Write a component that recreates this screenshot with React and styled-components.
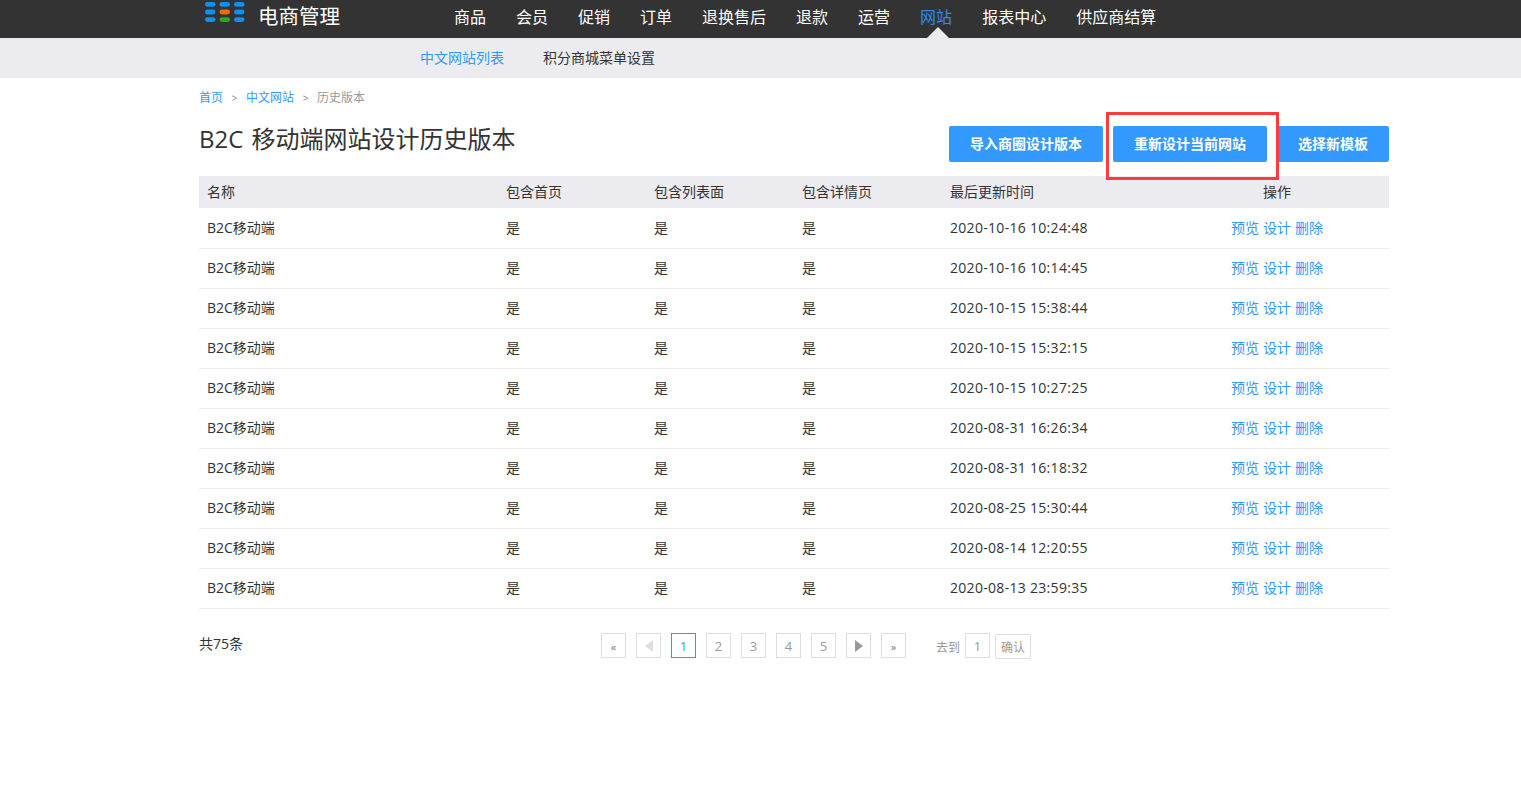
import React from "react";
import styled, { createGlobalStyle } from "styled-components";

const Global = createGlobalStyle`
  html, body { margin: 0; padding: 0; background: #fff; }
  body { font-family: "Open Sans", "Noto Sans CJK SC", sans-serif; color: #333; font-size: 14px; }
  a { text-decoration: none; }
`;

const Wrap = styled.div`
  width: 1190px;
  margin-left: 199px;
`;

const TopBar = styled.header`
  height: 38px;
  background: #333;
`;
const TopInner = styled(Wrap)`
  display: flex;
  height: 38px;
`;
const Logo = styled.div`
  display: flex;
  width: 255px;
  height: 38px;
  flex: none;
`;
const LogoMark = styled.svg`
  margin-left: 6px;
  flex: none;
  filter: blur(0.4px);
`;
const LogoText = styled.span`
  margin-left: 13px;
  color: #fff;
  font-size: 20.5px;
  line-height: 33px;
  white-space: nowrap;
`;
const Nav = styled.nav`
  display: flex;
  gap: 30px;
`;
const NavItem = styled.a`
  position: relative;
  display: block;
  height: 38px;
  line-height: 34px;
  font-size: 16px;
  white-space: nowrap;
  color: ${(p) => (p.$active ? "#3388ee" : "#fff")};
  ${(p) =>
    p.$active &&
    `&::after {
      content: "";
      position: absolute;
      left: 7px;
      bottom: 0;
      border-left: 11px solid transparent;
      border-right: 11px solid transparent;
      border-bottom: 11px solid #ecebf0;
    }`}
`;

const SubBar = styled.div`
  height: 40px;
  background: #ecebf0;
`;
const SubInner = styled(Wrap)`
  display: flex;
  gap: 39px;
  padding-left: 221px;
  box-sizing: border-box;
`;
const SubItem = styled.a`
  font-size: 14px;
  line-height: 40px;
  color: ${(p) => (p.$active ? "#3399ff" : "#333")};
`;

const Crumbs = styled.div`
  display: flex;
  align-items: center;
  height: 20px;
  margin-top: 9px;
  font-size: 12px;
  color: #999;
`;
const CrumbLink = styled.a`
  color: #3399ff;
`;
const CrumbSep = styled.span`
  width: 23px;
  padding-top: 1px;
  text-align: center;
  font-size: 10px;
  color: #888;
`;

const TitleRow = styled.div`
  position: relative;
  display: flex;
  align-items: flex-start;
  justify-content: space-between;
  height: 50px;
  margin-top: 19px;
`;
const Title = styled.h1`
  margin: -4px 0 0;
  font-size: 24px;
  font-weight: 400;
  line-height: 34px;
  word-spacing: 2px;
  color: #333;
`;
const Actions = styled.div`
  display: flex;
  gap: 10px;
`;
const Button = styled.button`
  height: 36px;
  padding: 0 21px 2px;
  border: 0;
  border-radius: 2px;
  background: #3399ff;
  color: #fff;
  font: 700 14px "Open Sans", "Noto Sans CJK SC", sans-serif;
  white-space: nowrap;
`;
const Highlight = styled.div`
  position: absolute;
  left: 907px;
  top: -14px;
  width: 173px;
  height: 68px;
  box-sizing: border-box;
  border: 3px solid #ff3b3b;
  pointer-events: none;
`;

const Table = styled.table`
  width: 100%;
  table-layout: fixed;
  border-collapse: separate;
  border-spacing: 0;
`;
const Th = styled.th`
  height: 33px;
  padding: 0 8px 2px;
  box-sizing: border-box;
  border-bottom: 1px solid #fff;
  background: #ecebf0;
  font-size: 14px;
  font-weight: 400;
  color: #333;
  text-align: ${(p) => p.$align || "left"};
`;
const Td = styled.td`
  height: 40px;
  padding: 0 8px 3px;
  box-sizing: border-box;
  border-bottom: 1px solid #ecebf0;
  font-size: 14px;
  color: #333;
  text-align: ${(p) => p.$align || "left"};
  white-space: nowrap;
`;
const TimeText = styled.span`
  letter-spacing: 0.3px;
`;
const RowLink = styled.a`
  color: #3399ff;
  & + & { margin-left: 4px; }
`;

const Footer = styled.div`
  display: flex;
  align-items: flex-start;
  margin-top: 24px;
`;
const Total = styled.div`
  width: 402px;
  flex: none;
  font-size: 14px;
  line-height: 22px;
`;
const Pager = styled.div`
  display: flex;
  align-items: flex-start;
  gap: 10px;
`;
const PageBox = styled.a`
  box-sizing: border-box;
  display: flex;
  align-items: center;
  justify-content: center;
  width: 25px;
  height: 25px;
  padding-top: ${(p) => (p.$small ? "2px" : "0")};
  border: 1px solid ${(p) => (p.$active ? "#3399ff" : "#ddd")};
  color: ${(p) => (p.$active ? "#3399ff" : p.$small ? "#777" : "#999")};
  font-size: ${(p) => (p.$small ? "11px" : "13px")};
`;
const Arrow = styled.i`
  width: 0;
  height: 0;
  border-top: 6px solid transparent;
  border-bottom: 6px solid transparent;
  ${(p) =>
    p.$dir === "left"
      ? `border-right: 8px solid #ddd;`
      : `border-left: 8px solid #999;`}
`;
const Goto = styled.div`
  display: flex;
  align-items: flex-start;
  gap: 5px;
  margin-left: 20px;
  color: #999;
  font-size: 12px;
`;
const GotoLabel = styled.span`
  line-height: 29px;
`;
const ConfirmBtn = styled.button`
  box-sizing: border-box;
  width: 36px;
  height: 25px;
  margin-top: 1px;
  padding: 0;
  border: 1px solid #ddd;
  border-radius: 2px;
  background: #fff;
  color: #999;
  font: 12px "Open Sans", "Noto Sans CJK SC", sans-serif;
`;

const navItems = ["商品", "会员", "促销", "订单", "退换售后", "退款", "运营", "网站", "报表中心", "供应商结算"];
const times = [
  "2020-10-16 10:24:48",
  "2020-10-16 10:14:45",
  "2020-10-15 15:38:44",
  "2020-10-15 15:32:15",
  "2020-10-15 10:27:25",
  "2020-08-31 16:26:34",
  "2020-08-31 16:18:32",
  "2020-08-25 15:30:44",
  "2020-08-14 12:20:55",
  "2020-08-13 23:59:35",
];
const dots = [
  ["#0f8ff0", "#0f8ff0", "#0f8ff0"],
  ["#0f8ff0", "#f06a00", "#0f8ff0"],
  ["#0f8ff0", "#2aa52a", "#0f8ff0"],
];

export default function App() {
  return (
    <>
      <Global />
      <TopBar>
        <TopInner>
          <Logo>
            <LogoMark width="40" height="24" viewBox="0 0 40 24">
              {dots.map((row, r) =>
                row.map((c, i) => (
                  <rect key={`${r}-${i}`} x={i * 14.5} y={2 + r * 7.6} width="10.5" height="4.8" rx="2.4" fill={c} />
                ))
              )}
            </LogoMark>
            <LogoText>电商管理</LogoText>
          </Logo>
          <Nav>
            {navItems.map((n) => (
              <NavItem key={n} $active={n === "网站"}>{n}</NavItem>
            ))}
          </Nav>
        </TopInner>
      </TopBar>
      <SubBar>
        <SubInner>
          <SubItem $active>中文网站列表</SubItem>
          <SubItem>积分商城菜单设置</SubItem>
        </SubInner>
      </SubBar>
      <Wrap>
        <Crumbs>
          <CrumbLink>首页</CrumbLink>
          <CrumbSep>&gt;</CrumbSep>
          <CrumbLink>中文网站</CrumbLink>
          <CrumbSep>&gt;</CrumbSep>
          <span>历史版本</span>
        </Crumbs>
        <TitleRow>
          <Title>B2C 移动端网站设计历史版本</Title>
          <Actions>
            <Button>导入商圈设计版本</Button>
            <Button>重新设计当前网站</Button>
            <Button>选择新模板</Button>
          </Actions>
          <Highlight />
        </TitleRow>
        <Table>
          <colgroup>
            <col width="299" />
            <col width="148" />
            <col width="148" />
            <col width="148" />
            <col width="223" />
            <col width="224" />
          </colgroup>
          <thead>
            <tr>
              <Th>名称</Th>
              <Th>包含首页</Th>
              <Th>包含列表面</Th>
              <Th>包含详情页</Th>
              <Th>最后更新时间</Th>
              <Th $align="center">操作</Th>
            </tr>
          </thead>
          <tbody>
            {times.map((t) => (
              <tr key={t}>
                <Td>B2C移动端</Td>
                <Td>是</Td>
                <Td>是</Td>
                <Td>是</Td>
                <Td><TimeText>{t}</TimeText></Td>
                <Td $align="center">
                  <RowLink>预览</RowLink>
                  <RowLink>设计</RowLink>
                  <RowLink>删除</RowLink>
                </Td>
              </tr>
            ))}
          </tbody>
        </Table>
        <Footer>
          <Total>共75条</Total>
          <Pager>
            <PageBox $small>«</PageBox>
            <PageBox><Arrow $dir="left" /></PageBox>
            <PageBox $active>1</PageBox>
            <PageBox>2</PageBox>
            <PageBox>3</PageBox>
            <PageBox>4</PageBox>
            <PageBox>5</PageBox>
            <PageBox><Arrow $dir="right" /></PageBox>
            <PageBox $small>»</PageBox>
            <Goto>
              <GotoLabel>去到</GotoLabel>
              <PageBox>1</PageBox>
              <ConfirmBtn>确认</ConfirmBtn>
            </Goto>
          </Pager>
        </Footer>
      </Wrap>
    </>
  );
}
